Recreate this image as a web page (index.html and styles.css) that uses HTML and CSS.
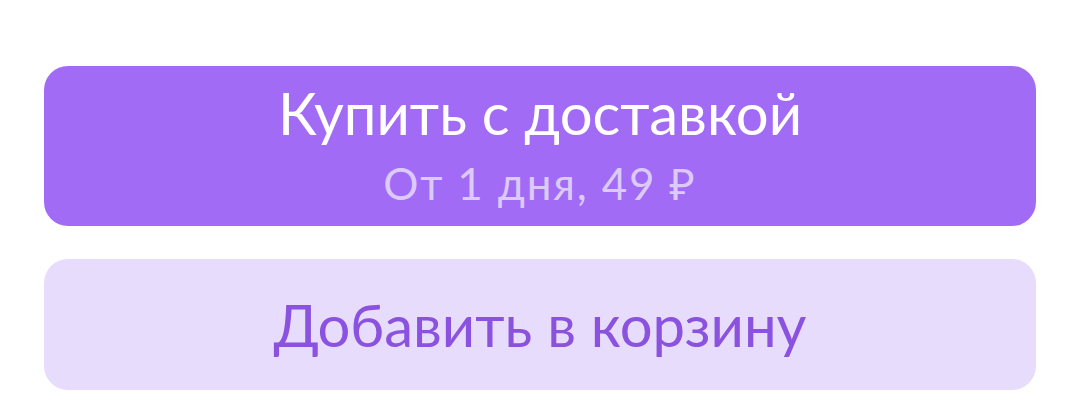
FILE: index.html
```html
<!DOCTYPE html>
<html lang="ru">

<head>
    <meta charset="UTF-8">
    <meta name="viewport" content="width=device-width, initial-scale=1.0">
    <title>Купить</title>
    <link rel="stylesheet" href="styles.css">
</head>

<body>
    <div class="actions">
        <button class="btn btn-primary">
            <span class="btn-title">Купить с доставкой</span>
            <span class="btn-sub">От 1 дня, 49 ₽</span>
        </button>
        <button class="btn btn-secondary">
            <span class="btn-title">Добавить в корзину</span>
        </button>
    </div>
</body>

</html>
```

FILE: styles.css
```css
body {
    font-family: Lato, "Noto Sans", sans-serif;
    background-color: #ffffff;
    margin: 0;
    padding: 0;
}

.actions {
    display: flex;
    flex-direction: column;
    gap: 33px;
    padding: 66px 44px 0;
}

.btn {
    display: flex;
    flex-direction: column;
    align-items: center;
    justify-content: center;
    width: 100%;
    border: none;
    border-radius: 24px;
    font-family: inherit;
    padding: 0;
    cursor: pointer;
}

.btn-primary {
    height: 160px;
    justify-content: flex-start;
    padding-top: 15px;
    gap: 13px;
    background-color: #a26bf6;
    color: #ffffff;
}

.btn-secondary {
    height: 131px;
    background-color: #e8dcfd;
    color: #8a52df;
}

.btn-title {
    font-size: 58px;
    line-height: 64px;
}

.btn-sub {
    font-size: 44px;
    line-height: 50px;
    letter-spacing: 1.8px;
    color: #dccafc;
}
```
